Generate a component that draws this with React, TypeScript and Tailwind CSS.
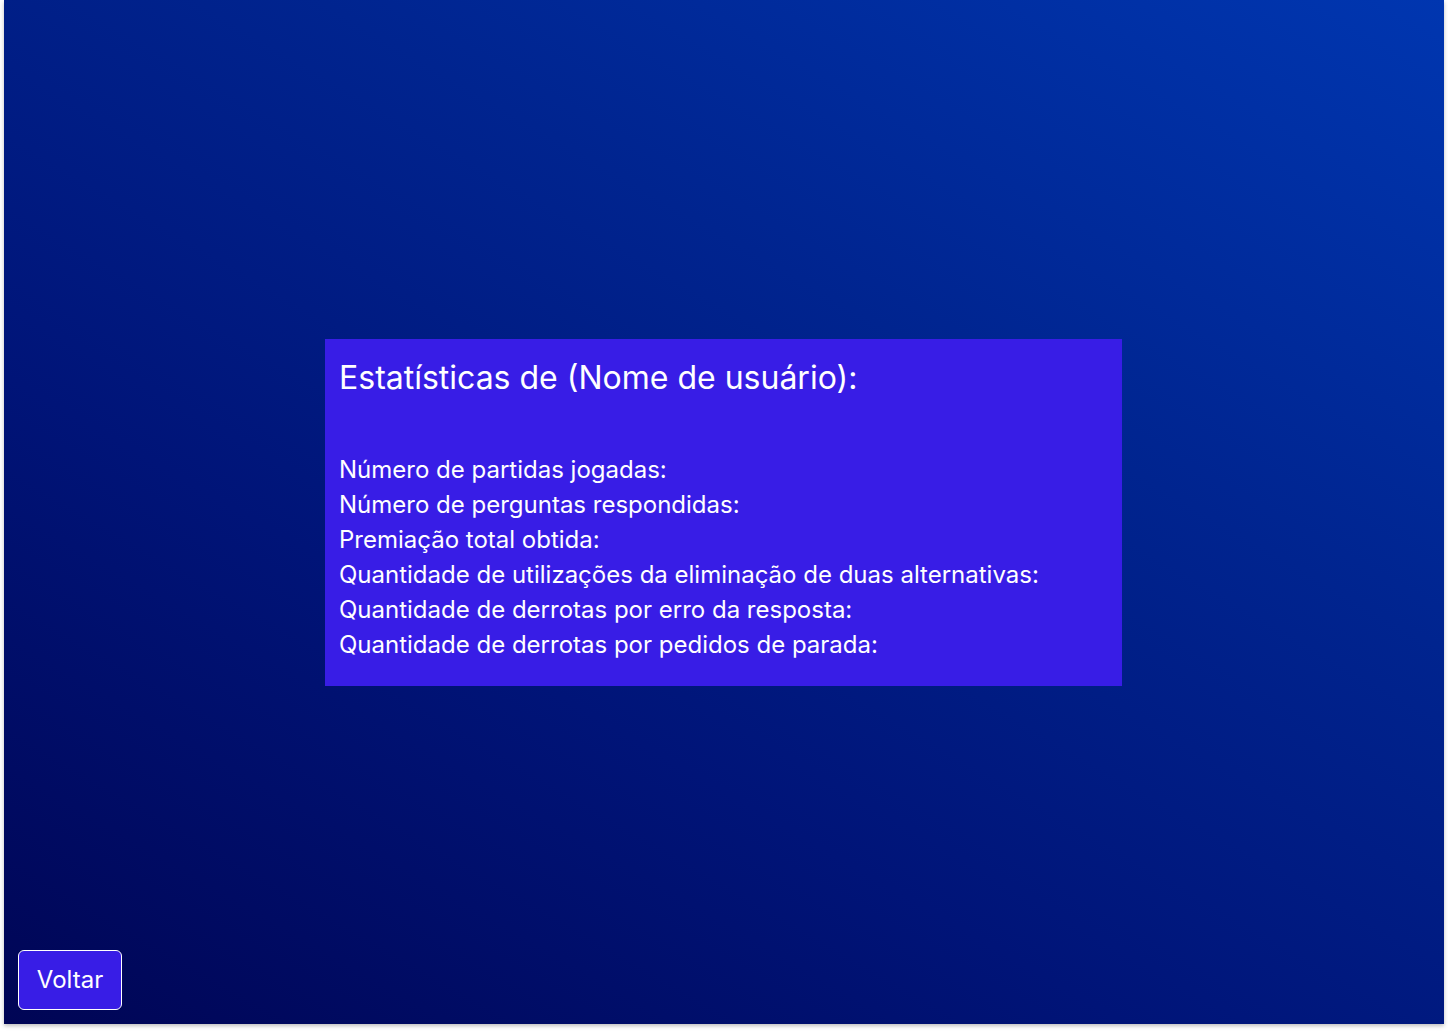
import React from "react";

export default function App() {
  const lines = [
    "Número de partidas jogadas:",
    "Número de perguntas respondidas:",
    "Premiação total obtida:",
    "Quantidade de utilizações da eliminação de duas alternativas:",
    "Quantidade de derrotas por erro da resposta:",
    "Quantidade de derrotas por pedidos de parada:",
  ];
  return (
    <div className="w-[1448px] h-[1032px] bg-white" style={{ fontFamily: "Inter, 'Noto Sans', sans-serif" }}>
      <div className="ml-[4px] w-[1440px] h-[1024px] shadow-[0_2px_4px_rgba(0,0,0,0.25)] bg-[linear-gradient(30deg,#000555_0%,#001478_35%,#00248f_65%,#0036b0_100%)] flex flex-col">
        <div className="pt-[339px] pl-[321px]">
          <div className="w-[797px] h-[347px] bg-[#381de6] px-[14px] pt-[17px] text-white">
            <h1 className="text-[32px] leading-[44px] font-normal">Estatísticas de (Nome de usuário):</h1>
            <div className="mt-[52px] text-[24px] leading-[35px]">
              {lines.map((l) => (
                <div key={l}>{l}</div>
              ))}
            </div>
          </div>
        </div>
        <div className="mt-auto pl-[14px] pb-[14px]">
          <button className="w-[104px] h-[60px] bg-[#381de6] border border-white rounded-[6px] text-white text-[24px]">
            Voltar
          </button>
        </div>
      </div>
    </div>
  );
}
